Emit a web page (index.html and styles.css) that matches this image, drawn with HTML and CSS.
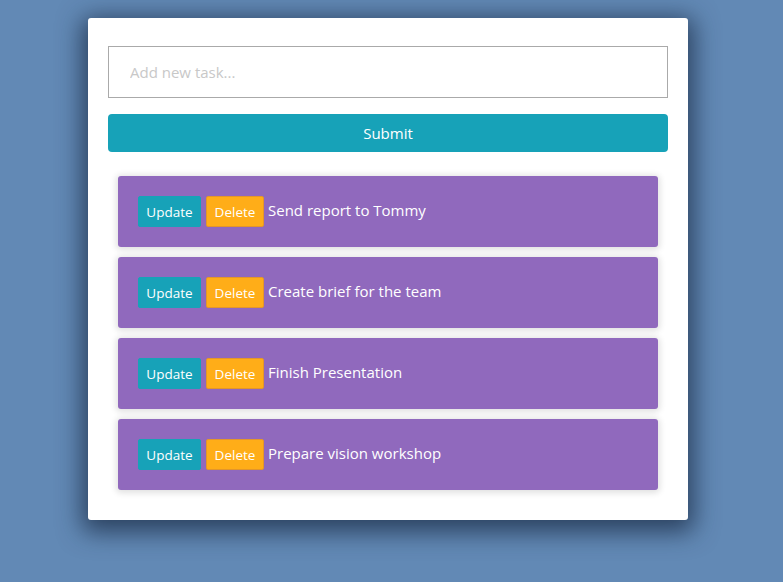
FILE: index.html
```html
<!DOCTYPE html>
<html>
<head>
<meta charset="utf-8">
<link rel="stylesheet" href="styles.css">
</head>
<body>
<div class="card">
  <input class="task-input" type="text" placeholder="Add new task...">
  <button class="submit">Submit</button>
  <ul class="list">
    <li class="item"><button class="btn update">Update</button><button class="btn delete">Delete</button><span class="text">Send report to Tommy</span></li>
    <li class="item"><button class="btn update">Update</button><button class="btn delete">Delete</button><span class="text">Create brief for the team</span></li>
    <li class="item"><button class="btn update">Update</button><button class="btn delete">Delete</button><span class="text">Finish Presentation</span></li>
    <li class="item"><button class="btn update">Update</button><button class="btn delete">Delete</button><span class="text">Prepare vision workshop</span></li>
  </ul>
</div>
</body>
</html>
```

FILE: styles.css
```css
html, body {
  margin: 0;
  padding: 0;
}
body {
  background: #6289b5;
  font-family: "Open Sans", "Noto Sans", sans-serif;
  min-height: 582px;
  padding-top: 18px;
  box-sizing: border-box;
}
.card {
  width: 600px;
  margin: 0 0 0 88px;
  background: #fff;
  border-radius: 3px;
  box-sizing: border-box;
  padding: 28px 20px 30px;
  box-shadow: 0 6px 24px 6px rgba(20, 35, 60, 0.7);
  display: flex;
  flex-direction: column;
}
.task-input {
  height: 52px;
  box-sizing: border-box;
  border: 1px solid #aaa;
  padding: 0 21px;
  font-family: inherit;
  font-size: 15px;
  outline: none;
  margin: 0;
}
.task-input::placeholder {
  color: #c8c8c8;
}
.submit {
  margin-top: 16px;
  height: 38px;
  background: #17a2b8;
  color: #fff;
  border: none;
  border-radius: 4px;
  font-family: inherit;
  font-size: 15px;
}
.list {
  list-style: none;
  margin: 24px 10px 0;
  padding: 0;
  display: flex;
  flex-direction: column;
  gap: 10px;
}
.item {
  background: #9069bd;
  border-radius: 3px;
  height: 71px;
  box-sizing: border-box;
  padding: 0 20px;
  display: flex;
  align-items: center;
  box-shadow: 0 1px 6px 2px rgba(0, 0, 0, 0.12);
}
.btn {
  height: 31px;
  box-sizing: border-box;
  border-radius: 2px;
  font-family: inherit;
  font-size: 13.5px;
  color: #fff;
  padding: 0 6px;
  margin: 0;
}
.update {
  background: #17a2b8;
  border: 1px solid #17a2b8;
  width: 63px;
}
.delete {
  background: #ffad18;
  border: 1px solid #e3962a;
  margin-left: 5px;
  width: 58px;
}
.text {
  color: #fff;
  font-size: 15px;
  margin-left: 4px;
  margin-top: -3px;
}
```
